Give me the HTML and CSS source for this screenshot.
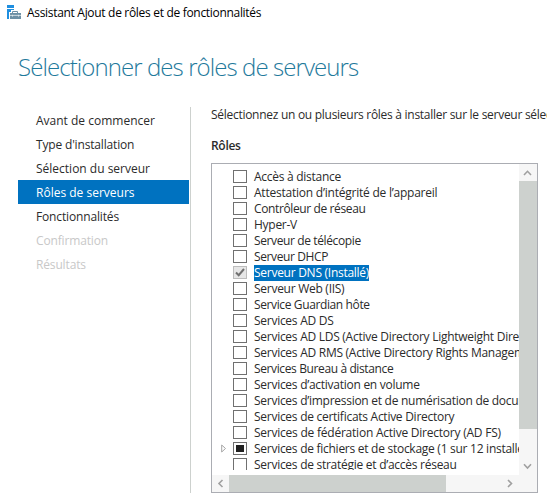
FILE: index.html
```html
<!DOCTYPE html>
<html lang="fr">
<head>
<meta charset="utf-8">
<title>Assistant Ajout de rôles et de fonctionnalités</title>
<link rel="stylesheet" href="styles.css">
</head>
<body>
<header class="titlebar">
  <svg class="app-icon" width="14" height="14" viewBox="0 0 14 14">
    <path fill="#1f8fe0" d="M0 0h7v3H0zM0 4h7v1H4v2H2v7H0z"/>
    <path fill="none" stroke="#6d90a5" d="M5.500 8v-1.500h5V8"/>
    <path fill="#6d90a5" d="M3 8h11v6H3z"/>
    <path fill="none" stroke="#e4ebef" stroke-width=".8" d="M3 10.400h11M5.500 9.800v1.800M11.500 9.800v1.800"/>
  </svg>
  <span class="title">Assistant Ajout de rôles et de fonctionnalités</span>
</header>
<h1><span>Sélectionner des rôles de serveurs</span></h1>
<div class="body">
  <nav>
    <a><span>Avant de commencer</span></a>
    <a><span class="type">Type d'installation</span></a>
    <a><span>Sélection du serveur</span></a>
    <a class="active"><span>Rôles de serveurs</span></a>
    <a><span class="tight">Fonctionnalités</span></a>
    <a class="disabled"><span class="tight">Confirmation</span></a>
    <a class="disabled"><span class="tight">Résultats</span></a>
  </nav>
  <main>
    <p class="intro">Sélectionnez un ou plusieurs rôles à installer sur le serveur sélectionné.</p>
    <h2>Rôles</h2>
    <div class="listbox">
      <ul class="roles">
        <li><i class="box"></i><span>Accès à distance</span></li>
        <li><i class="box"></i><span class="wide">Attestation d’intégrité de l’appareil</span></li>
        <li><i class="box"></i><span class="narrow">Contrôleur de réseau</span></li>
        <li><i class="box"></i><span>Hyper-V</span></li>
        <li><i class="box"></i><span class="narrow">Serveur de télécopie</span></li>
        <li><i class="box"></i><span class="narrow">Serveur DHCP</span></li>
        <li class="selected"><i class="box checked"><svg width="12" height="11" viewBox="0 0 12 11"><path d="M2 5.500 4.700 8.200 10 2" fill="none" stroke="#707070" stroke-width="2"/></svg></i><span>Serveur DNS (Installé)</span></li>
        <li><i class="box"></i><span>Serveur Web (IIS)</span></li>
        <li><i class="box"></i><span class="narrow">Service Guardian hôte</span></li>
        <li><i class="box"></i><span>Services AD DS</span></li>
        <li><i class="box"></i><span>Services AD LDS (Active Directory Lightweight Directory Services)</span></li>
        <li><i class="box"></i><span>Services AD RMS (Active Directory Rights Management Services)</span></li>
        <li><i class="box"></i><span class="narrow">Services Bureau à distance</span></li>
        <li><i class="box"></i><span>Services d’activation en volume</span></li>
        <li><i class="box"></i><span>Services d’impression et de numérisation de documents</span></li>
        <li><i class="box"></i><span>Services de certificats Active Directory</span></li>
        <li><i class="box"></i><span class="wide">Services de fédération Active Directory (AD FS)</span></li>
        <li class="parent"><svg class="expander" width="6" height="9" viewBox="0 0 6 9"><path d="M.7 1v7L4.500 4.500z" fill="none" stroke="#a6a6a6"/></svg><i class="box partial"></i><span>Services de fichiers et de stockage (1 sur 12 installé(s))</span></li>
        <li><i class="box"></i><span>Services de stratégie et d’accès réseau</span></li>
      </ul>
      <div class="vbar">
        <svg width="17" height="17" viewBox="0 0 17 17"><path d="M5 11 8.500 7.300 12 11" /></svg>
        <div class="vthumb"></div>
        <svg class="down" width="17" height="17" viewBox="0 0 17 17"><path d="M5 6.300 8.500 10 12 6.300"/></svg>
      </div>
      <div class="hbar">
        <svg width="17" height="17" viewBox="0 0 17 17"><path d="M10.500 5 7 8.500l3.500 3.500"/></svg>
        <div class="hthumb"></div>
        <svg class="right" width="17" height="17" viewBox="0 0 17 17"><path d="M7 5l3.500 3.500L7 12"/></svg>
      </div>
    </div>
  </main>
</div>
</body>
</html>
```
FILE: styles.css
```css
* { box-sizing: border-box; }
body {
  margin: 0;
  width: 547px;
  height: 497px;
  overflow: hidden;
  background: #fff;
  color: #2b2b2b;
  font: 12px/16px "Open Sans", "Noto Sans", sans-serif;
  white-space: nowrap;
}
.titlebar { display: flex; align-items: center; height: 26px; padding-left: 7px; gap: 6px; color: #000; }
.app-icon { margin-top: -2px; }
.title { font-size: 12px; letter-spacing: -0.31px; }
h1 { margin: 21px 0 0 18px; height: 40px; font-weight: 300; font-size: 24px; line-height: 40px; color: #1f7a9c; letter-spacing: -0.92px; }
.body { display: flex; margin-top: 20px; }
nav { width: 173px; height: 386px; margin-left: 18px; border-right: 1px solid #cdd1ce; display: flex; flex-direction: column; padding-top: 1px; }
nav a { height: 24px; line-height: 25px; padding-left: 18px; margin-right: 1px; }
nav .tight { letter-spacing: -0.15px; }
nav .type { letter-spacing: -0.17px; }
nav .active { background: #0072c0; color: #fff; }
nav .disabled { color: #c8c8c8; }
main { margin-left: 20px; flex: 1; min-width: 0; overflow: hidden; }
.intro { margin: 0; height: 16px; letter-spacing: -0.28px; }
h2 { margin: 15px 0 9px; font-size: 12px; line-height: 16px; font-weight: 600; letter-spacing: -0.3px; }
.listbox { width: 327px; height: 330px; border: 1px solid #abadb3; display: grid; grid-template-columns: 307px 18px; grid-template-rows: 311px 17px; }
.roles { list-style: none; margin: 0; padding: 5px 0 0 21px; height: 306px; overflow: hidden; }
.roles li { display: flex; align-items: flex-start; height: 16px; gap: 7px; letter-spacing: -0.27px; }
.roles li span { line-height: 16px; }
.roles .wide { letter-spacing: -0.23px; }
.roles .narrow { letter-spacing: -0.38px; }
.box { flex: none; display: block; width: 14px; height: 13px; margin-top: 1px; border: 1px solid #707070; background: #fff; }
.checked { background: #e6e6e6; border-color: #bcbcbc; }
.checked svg { display: block; }
.partial { padding: 2px; background: #212121 content-box; }
.selected span { background: #0072c0; color: #fff; }
.parent { margin-left: -12px; }
.parent .expander { flex: none; margin: 3px -1px 0 0; }
.vbar { background: #f6f6f6; display: flex; flex-direction: column; }
.vthumb { height: 248px; background: #cdd1ce; }
.vbar .down { margin-top: 29px; }
.hbar { grid-column: 1 / 3; background: #f6f6f6; display: flex; }
.hthumb { width: 217px; background: #cdd1ce; }
.hbar .right { margin-left: 55px; }
.vbar svg, .hbar svg { flex: none; fill: none; stroke: #a0a0a0; stroke-width: 1.6; }
```
